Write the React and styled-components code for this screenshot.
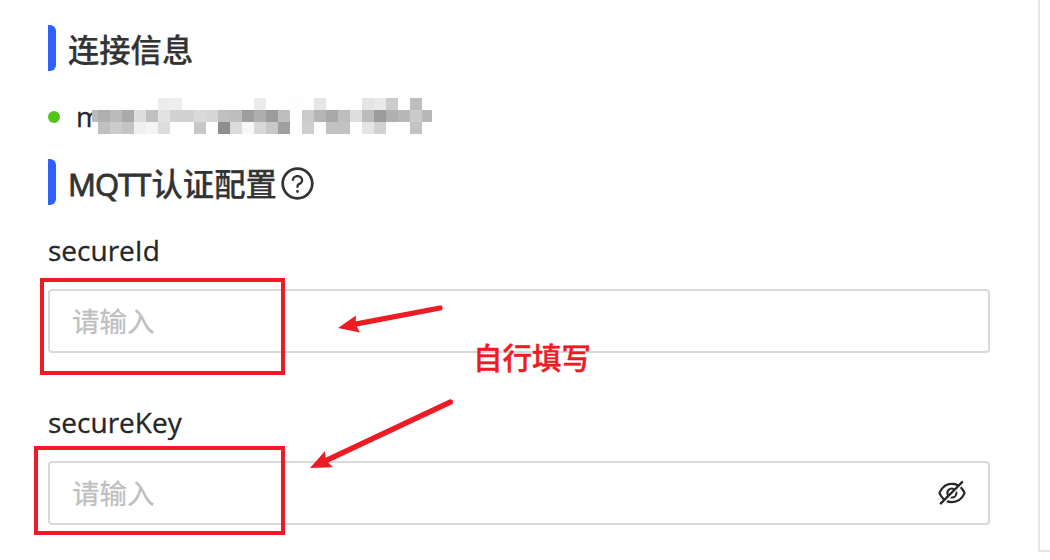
import React from "react";
import styled, { createGlobalStyle } from "styled-components";
import { AiOutlineEyeInvisible, AiOutlineQuestionCircle } from "react-icons/ai";

// grey levels of the masked address, "-" is an empty cell
const MOSAIC = [
  "- - - - - - ec ee - - - - - - eb - - fd - e6 - - - e4 e9 cc - be -",
  "bb b0 bb aa dd c0 e2 d2 d2 da d6 c0 be 9e ae 9b be fe cb b6 a8 be de bb 9c b0 b8 cb b8",
  "- c0 cc c4 f0 f4 dd - - c8 - 8e db f7 d8 c8 a0 fe ce - c2 c2 - e5 d2 - - c3 -",
].map((row) => row.split(" "));

const Field = ({ label, secret }) => (
  <FieldItem>
    <Label>{label}</Label>
    <InputBox>
      <Input placeholder="请输入" aria-label={label} />
      {secret && <AiOutlineEyeInvisible size={32} />}
    </InputBox>
  </FieldItem>
);

export default function App() {
  return (
    <Page>
      <GlobalStyle />
      <Main>
        <Title>
          <TitleText>连接信息</TitleText>
        </Title>
        <Address>
          <Dot />
          <AddressText>m</AddressText>
          <Mosaic>
            {MOSAIC.map((row) =>
              row.map((c, i) => (
                <Cell key={i} style={{ background: c === "-" ? "#fff" : `#${c}${c}${c}` }} />
              ))
            )}
          </Mosaic>
        </Address>
        <Title>
          <TitleText>
            <Latin>MQTT</Latin>认证配置
          </TitleText>
          <AiOutlineQuestionCircle size={37} />
        </Title>
        <Form>
          <Field label="secureId" />
          <Field label="secureKey" secret />
        </Form>
      </Main>
      <SidePanel />

      <Frame $x={40} $y={278} $w={245} $h={97} />
      <Frame $x={34} $y={446} $w={251} $h={89} />
      <Arrows viewBox="0 0 1050 560">
        <path d="M440 308L354 324.3M450.500 402L324 461.500" />
        <polygon points="338,328 356,315.500 355.500,324 360,332.500" />
        <polygon points="310,468 325,451 326,460.500 333,467.300" />
      </Arrows>
      <Note>自行填写</Note>
    </Page>
  );
}

const GlobalStyle = createGlobalStyle`
* {
  box-sizing: border-box;
}
body {
  margin: 0;
  background: #fff;
  overflow: hidden;
}
`

const Page = styled.div`
position: relative;
display: flex;
width: 1050px;
height: 560px;
overflow: hidden;
color: #262626;
font-family: "Open Sans", "Noto Sans CJK SC", sans-serif;
font-size: 28px;
`

const Main = styled.main`
width: 1038px;
flex: none;
padding: 25px 48px 0;
`

const SidePanel = styled.aside`
flex: none;
width: 12px;
height: 552px;
border-left: 2px solid #e5e5e5;
border-bottom: 2px solid #e5e5e5;
`

const Title = styled.div`
display: flex;
align-items: center;
height: 46px;
color: #333;

&::before {
  content: "";
  width: 8px;
  height: 46px;
  margin-right: 12px;
  border-radius: 0 6px 6px 0;
  background: #2f61ff;
}

svg {
  margin-top: 2px;
}
`

const TitleText = styled.h2`
margin: 0 2px 0 0;
padding-top: 2px;
font-family: "Noto Sans CJK SC", sans-serif;
font-size: 31.3px;
font-weight: 500;
line-height: 46px;
white-space: nowrap;
-webkit-text-stroke: 0.25px currentColor;
`

const Latin = styled.span`
margin-right: 1px;
font-family: "Open Sans", sans-serif;
font-size: 31px;
letter-spacing: -0.9px;
-webkit-text-stroke: 0.9px currentColor;
`

const Address = styled.div`
display: flex;
align-items: center;
height: 36px;
margin: 27px 0 25px;
`

const Dot = styled.span`
width: 12px;
height: 12px;
margin-top: 2px;
border-radius: 50%;
background: #52c41a;
`

const AddressText = styled.span`
width: 15px;
margin-left: 17px;
line-height: 36px;
text-indent: -1px;
-webkit-text-stroke: 0.3px currentColor;
`

const Mosaic = styled.div`
display: grid;
grid-template-columns: 6px repeat(27, 12px) 10px;
grid-auto-rows: 12px;
z-index: 1;
`

const Cell = styled.span``

const Form = styled.div`
display: flex;
flex-direction: column;
gap: 47px;
margin-top: 23px;
`

const FieldItem = styled.div`
display: flex;
flex-direction: column;
gap: 17px;
width: 942px;
`

const Label = styled.label`
height: 44px;
line-height: 44px;
-webkit-text-stroke: 0.3px currentColor;
`

const InputBox = styled.div`
display: flex;
align-items: center;
height: 64px;
padding: 0 20px 0 22px;
border: 2px solid #d9d9d9;
border-radius: 4px;
`

const Input = styled.input`
flex: 1;
min-width: 0;
margin-top: -3px;
padding: 0;
border: 0;
outline: 0;
background: none;
font-family: "Noto Sans CJK SC", sans-serif;
font-size: 27.5px;
-webkit-text-stroke: 0.3px #bfbfbf;

&::placeholder {
  color: #bfbfbf;
}
`

const Frame = styled.div`
position: absolute;
left: ${(p) => p.$x}px;
top: ${(p) => p.$y}px;
width: ${(p) => p.$w}px;
height: ${(p) => p.$h}px;
border: 4px solid #ed1c24;
`

const Arrows = styled.svg`
position: absolute;
inset: 0;
fill: #ed1c24;

path {
  fill: none;
  stroke: #ed1c24;
  stroke-width: 5.3;
  stroke-linecap: round;
}
`

const Note = styled.div`
position: absolute;
left: 473px;
top: 335px;
color: #ed1c24;
font-family: "Noto Sans CJK SC", sans-serif;
font-size: 29.5px;
font-weight: 500;
line-height: 42px;
white-space: nowrap;
-webkit-text-stroke: 0.4px currentColor;
`
